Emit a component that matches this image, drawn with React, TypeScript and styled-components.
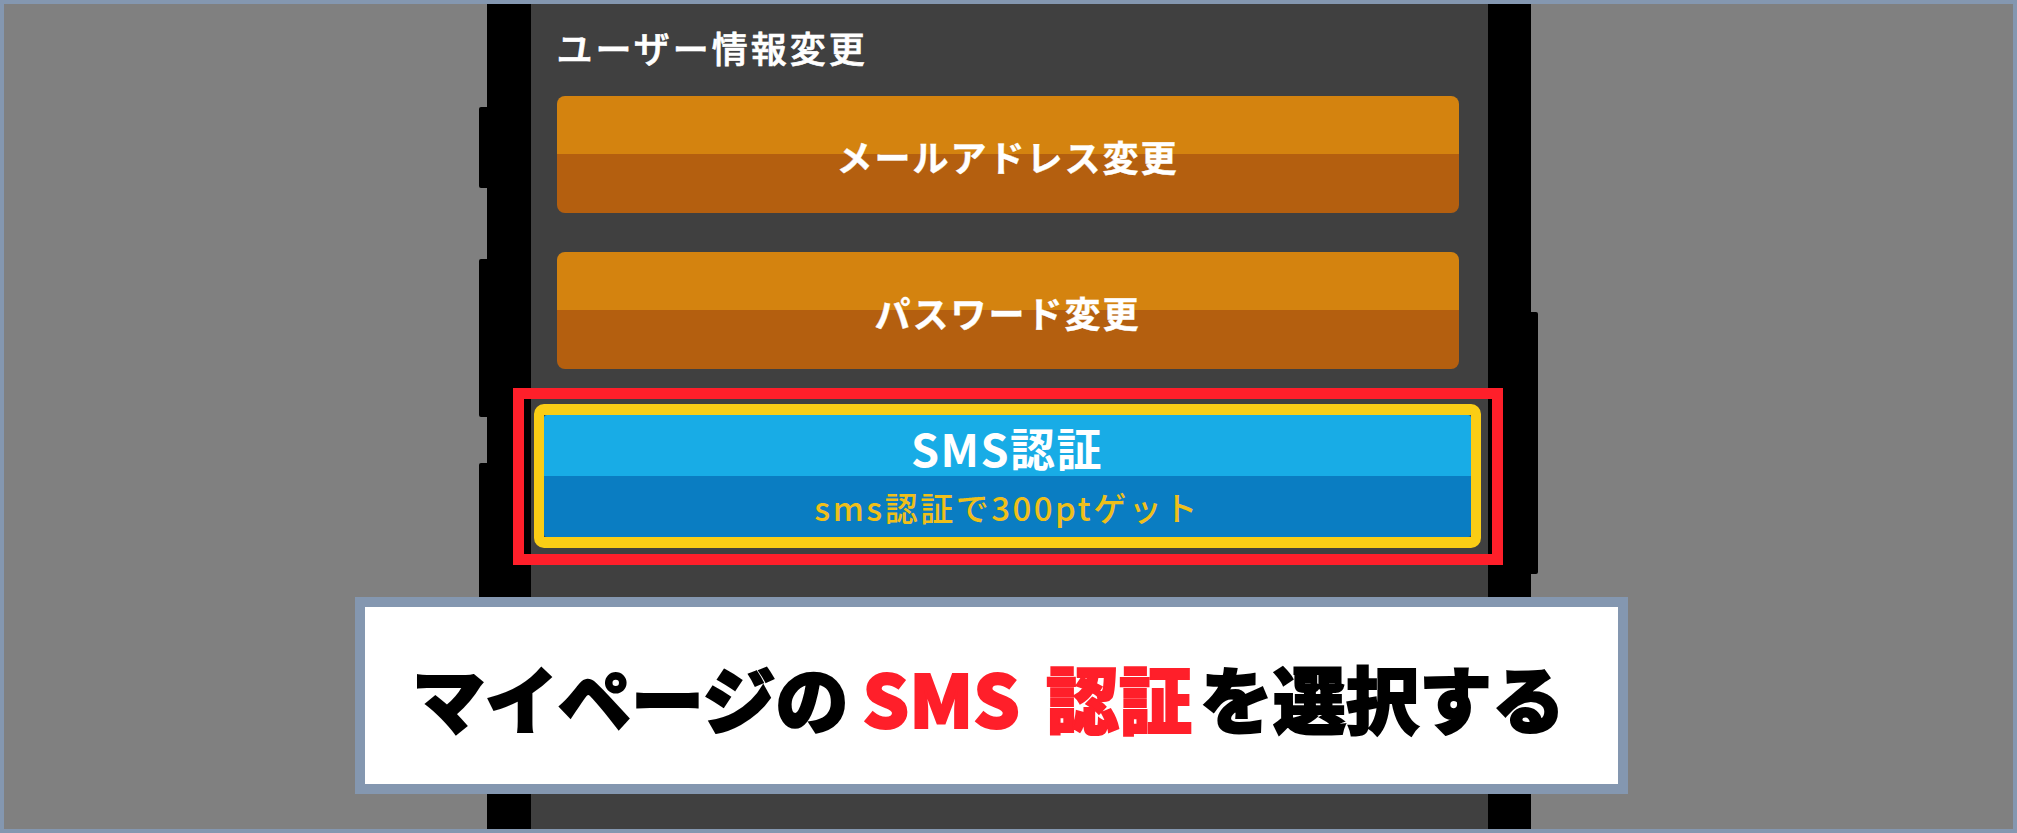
import React from "react";
import styled, { createGlobalStyle } from "styled-components";

const GlobalStyle = createGlobalStyle`
  html, body {
    margin: 0;
    padding: 0;
    background: #808080;
  }
  body {
    font-family: "Noto Sans CJK JP", "Noto Sans", sans-serif;
  }
`;

const Stage = styled.div`
  position: relative;
  box-sizing: border-box;
  width: 2017px;
  height: 833px;
  border: 4px solid #8497b0;
  background: #808080;
  display: flex;
  justify-content: center;
  overflow: hidden;
`;

const Phone = styled.div`
  position: relative;
  width: 957px;
  height: 100%;
  border-left: 44px solid #000;
  border-right: 43px solid #000;
`;

const SideKey = styled.div<{ $side: "left" | "right"; $top: number; $height: number }>`
  position: absolute;
  top: ${({ $top }) => $top}px;
  height: ${({ $height }) => $height}px;
  width: ${({ $side }) => ($side === "left" ? 8 : 7)}px;
  ${({ $side }) => ($side === "left" ? "left: -52px;" : "right: -50px;")}
  background: #000;
  border-radius: ${({ $side }) => ($side === "left" ? "2px 0 0 2px" : "0 2px 2px 0")};
`;

const Screen = styled.div`
  box-sizing: border-box;
  height: 100%;
  background: #404040;
  padding: 21px 29px 0 26px;
  display: flex;
  flex-direction: column;
`;

const SectionTitle = styled.h2`
  margin: 0 0 27px;
  font-size: 36px;
  line-height: 44px;
  font-weight: 500;
  letter-spacing: 3px;
  color: #ffffff;
  -webkit-text-stroke: 0.7px #ffffff;
`;

const MenuButton = styled.div`
  height: 117px;
  margin-bottom: 39px;
  border-radius: 8px;
  background: linear-gradient(#d4830f 0 50%, #b45f0f 50% 100%);
  display: flex;
  align-items: center;
  justify-content: center;
  padding-top: 3px;
  box-sizing: border-box;
  color: #ffffff;
  font-size: 36px;
  font-weight: 700;
  letter-spacing: 2px;
  -webkit-text-stroke: 0.4px #ffffff;
`;

const Highlight = styled.div`
  position: relative;
  margin: -4px -22px 0 -23px;
`;

const RedFrame = styled.div`
  position: absolute;
  top: -16px;
  left: -21px;
  right: -22px;
  bottom: -17px;
  border: 11px solid #ff1f2a;
  pointer-events: none;
`;

const SmsButton = styled.div`
  border-style: solid;
  border-color: #facd15;
  border-width: 11px 10px;
  border-radius: 10px;
  overflow: hidden;
`;

const SmsInner = styled.div`
  height: 122px;
  box-sizing: border-box;
  padding-top: 4px;
  border-radius: 3px;
  background: linear-gradient(#18ace6 0 50%, #0a7dc2 50% 100%);
  display: flex;
  flex-direction: column;
  align-items: center;
`;

const SmsTitle = styled.div`
  line-height: 58px;
  font-size: 45px;
  font-weight: 700;
  letter-spacing: 1.5px;
  color: #ffffff;
`;

const SmsSub = styled.div`
  line-height: 60px;
  font-size: 33px;
  font-weight: 500;
  letter-spacing: 2.5px;
  color: #efbf1a;
`;

const Caption = styled.div`
  position: absolute;
  z-index: 2;
  left: 351px;
  top: 593px;
  width: 1273px;
  height: 197px;
  box-sizing: border-box;
  border: 10px solid #8497b0;
  background: #ffffff;
  display: flex;
  align-items: center;
  justify-content: center;
  padding-right: 6px;
`;

const CaptionText = styled.div`
  display: flex;
  align-items: center;
  font-size: 73px;
  line-height: 90px;
  font-weight: 900;
  color: #000000;
  white-space: nowrap;
`;

const Word = styled.span<{ $accent?: boolean; $gap?: number }>`
  color: ${({ $accent }) => ($accent ? "#ff1f2a" : "#000000")};
  -webkit-text-stroke: 2px ${({ $accent }) => ($accent ? "#ff1f2a" : "#000000")};
  margin-left: ${({ $gap = 0 }) => $gap}px;
`;

export default function App() {
  return (
    <>
      <GlobalStyle />
      <Stage>
        <Phone>
          <SideKey $side="left" $top={103} $height={81} />
          <SideKey $side="left" $top={255} $height={158} />
          <SideKey $side="left" $top={459} $height={150} />
          <SideKey $side="right" $top={308} $height={262} />
          <Screen>
            <SectionTitle>ユーザー情報変更</SectionTitle>
            <MenuButton>メールアドレス変更</MenuButton>
            <MenuButton>パスワード変更</MenuButton>
            <Highlight>
              <SmsButton>
                <SmsInner>
                  <SmsTitle>SMS認証</SmsTitle>
                  <SmsSub>sms認証で300ptゲット</SmsSub>
                </SmsInner>
              </SmsButton>
              <RedFrame />
            </Highlight>
          </Screen>
        </Phone>
        <Caption>
          <CaptionText>
            <Word>マイページの</Word>
            <Word $accent $gap={14}>SMS</Word>
            <Word $accent $gap={26}>認証</Word>
            <Word $gap={8}>を選択する</Word>
          </CaptionText>
        </Caption>
      </Stage>
    </>
  );
}
